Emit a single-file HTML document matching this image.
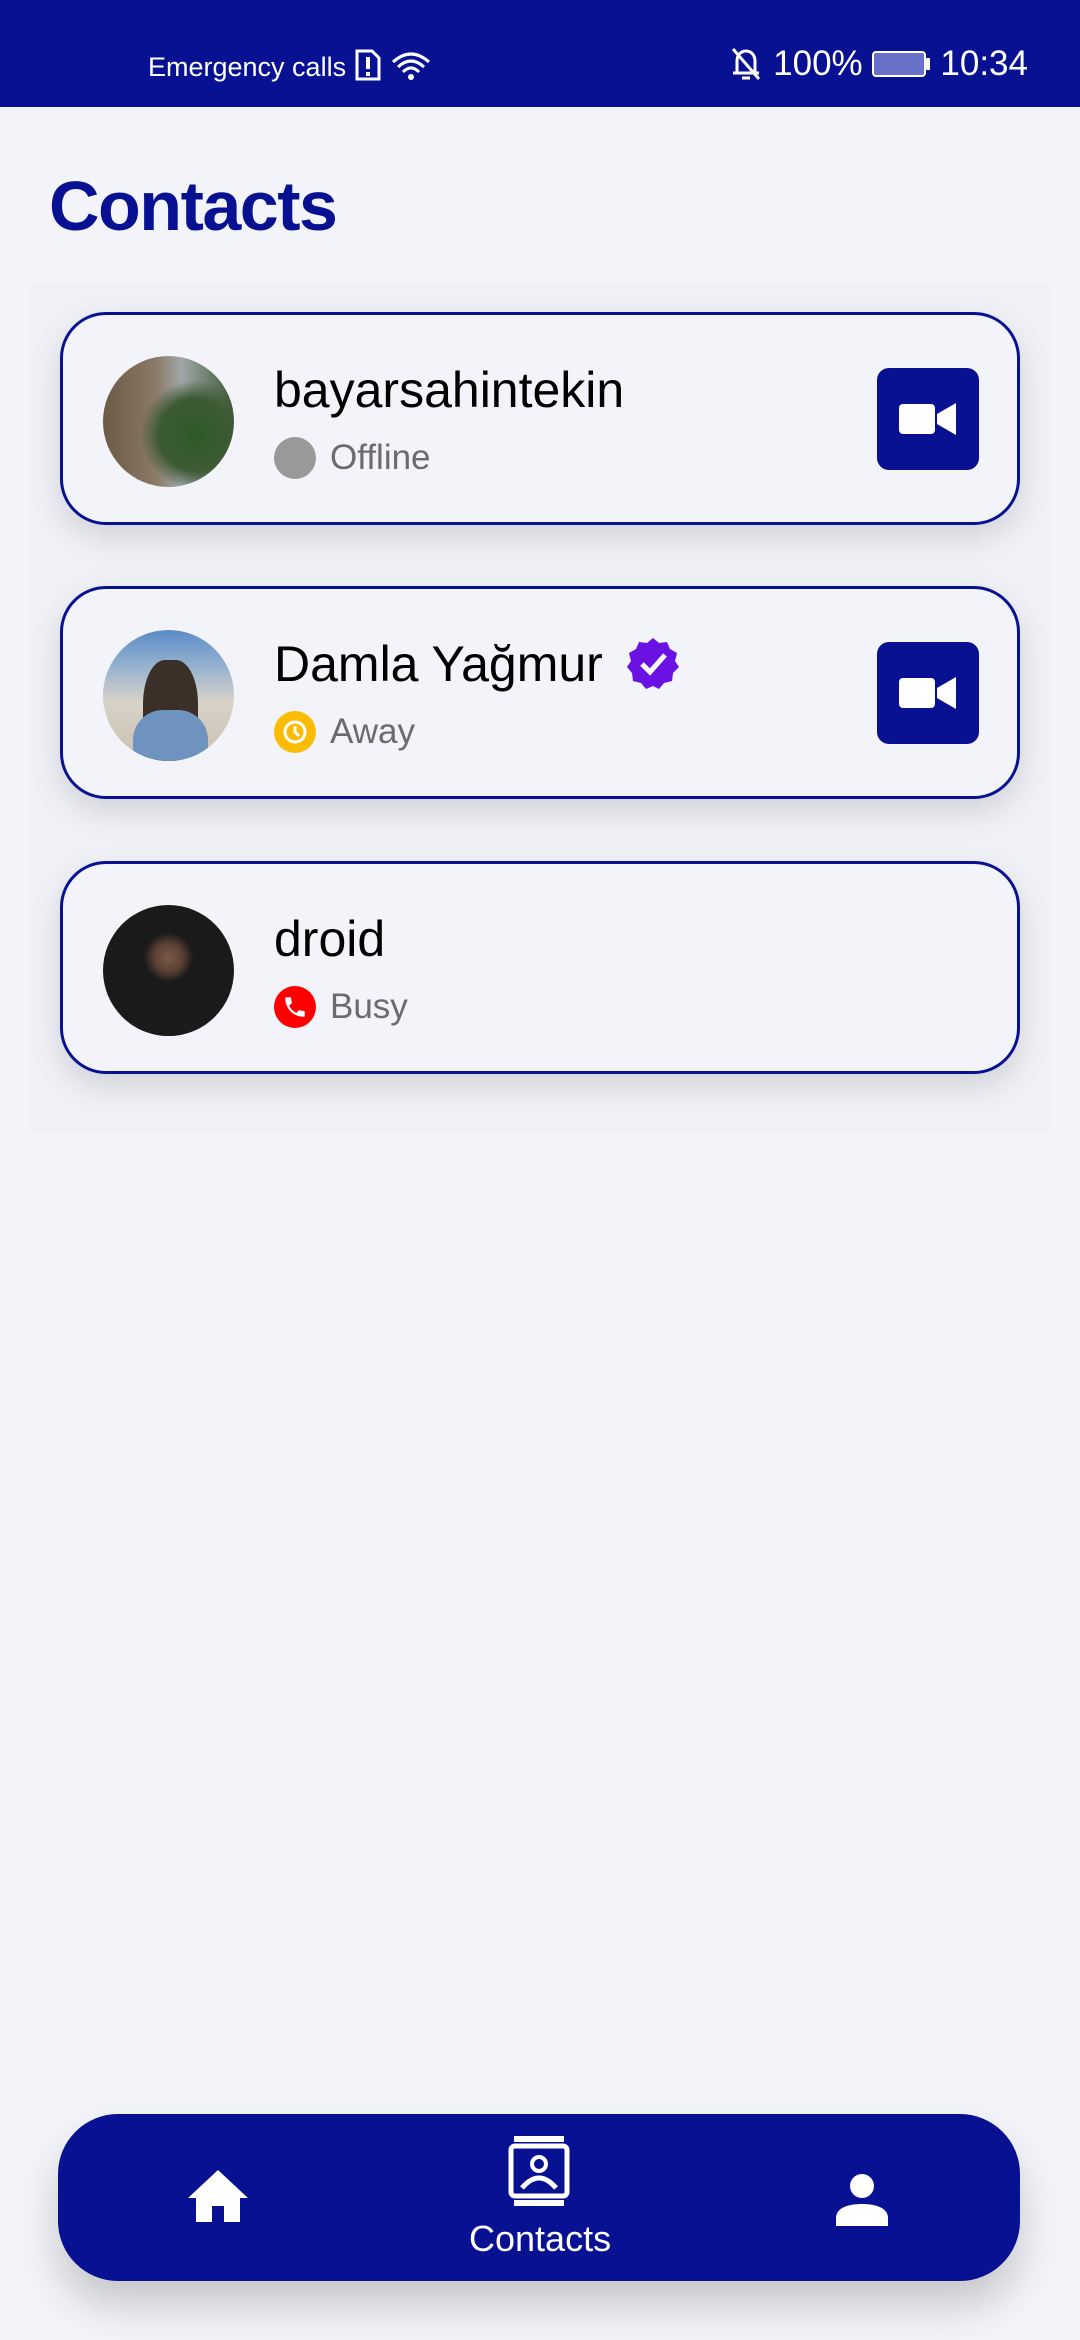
<!DOCTYPE html>
<html><head><meta charset="utf-8"><style>
*{margin:0;padding:0;box-sizing:border-box}
body{width:1080px;height:2340px;background:#f2f4f9;font-family:"Liberation Sans",sans-serif;position:relative;overflow:hidden}
.sb{position:absolute;left:0;top:0;width:1080px;height:107px;background:#081192;color:#fff}
.sb .l{position:absolute;left:148px;top:48px;font-size:27px}
.sb .r{position:absolute;right:52px;top:44px;font-size:35px;display:flex;align-items:center}
h1{position:absolute;left:49px;top:166px;font-size:70px;color:#081192;font-weight:bold;letter-spacing:-1.5px}
.wrap{position:absolute;left:30px;top:283px;width:1020px;height:851px;background:#eff1f7}
.card{position:absolute;left:60px;width:960px;height:213px;border:3px solid #081192;border-radius:46px;background:#f2f4f9;box-shadow:0 12px 30px rgba(0,0,0,0.13)}
.av{position:absolute;left:40px;top:41px;width:131px;height:131px;border-radius:50%;overflow:hidden}
.nm{position:absolute;left:211px;top:46px;font-size:50px;color:#000}
.st{position:absolute;left:211px;top:122px;height:42px;display:flex;align-items:center;font-size:35px;color:#6b6b6b}
.dot{width:42px;height:42px;border-radius:50%;margin-right:14px;display:flex;align-items:center;justify-content:center}
.vb{position:absolute;left:814px;top:53px;width:102px;height:102px;background:#081192;border-radius:12px}
.nav{position:absolute;left:58px;top:2114px;width:962px;height:167px;background:#081192;border-radius:60px;box-shadow:0 25px 40px rgba(0,0,0,0.18)}
</style></head><body>
<div class="sb"><div class="l">Emergency calls <svg width="28" height="34" viewBox="0 0 28 34" style="vertical-align:-6px"><path d="M3 3 H18 L25 10 V31 H3Z" fill="none" stroke="#fff" stroke-width="3"/><rect x="12" y="9" width="4" height="12" fill="#fff"/><rect x="12" y="24" width="4" height="4" fill="#fff"/></svg> <svg width="44" height="34" viewBox="0 0 44 34" style="vertical-align:-6px"><path d="M4 14 Q22 -2 40 14 M9 19 Q22 7 35 19 M14 24 Q22 16 30 24" stroke="#fff" stroke-width="3" fill="none"/><circle cx="22" cy="29" r="3" fill="#fff"/></svg></div>
<div class="r"><svg width="34" height="38" viewBox="0 0 34 38"><path d="M8 28 V16 C8 10 12 6 17 6 C22 6 26 10 26 16 V28 H30 M4 28 H26" stroke="#fff" stroke-width="3" fill="none"/><path d="M13 33 H21" stroke="#fff" stroke-width="3"/><path d="M4 4 L30 34" stroke="#fff" stroke-width="3"/></svg>&nbsp;100%&nbsp;<span style="display:inline-block;width:54px;height:26px;border:2px solid #fff;border-radius:4px;background:#6870c8"></span><span style="display:inline-block;width:4px;height:12px;background:#fff;margin-right:10px"></span>10:34</div></div>
<h1>Contacts</h1>
<div class="wrap"></div>

<div class="card" style="top:312px">
<div class="av" style="background:radial-gradient(circle at 70% 60%,#2f5a2a 0,#3d5a35 30%,transparent 45%),linear-gradient(90deg,#6b5a45,#8a7a66 40%,#a0a7a8 60%,#3d5a35)"></div>
<div class="nm">bayarsahintekin</div>
<div class="st"><div class="dot" style="background:#999"></div>Offline</div>
<div class="vb"><svg width="102" height="102" viewBox="0 0 102 102"><rect x="22" y="36" width="36" height="30" rx="4" fill="#fff"/><path d="M60 46 L79 35 V67 L60 56Z" fill="#fff"/></svg></div>
</div>

<div class="card" style="top:586px">
<div class="av" style="background:linear-gradient(180deg,#5a8cc8 0,#9bb5d0 30%,#d8d2c8 55%,#c9c0b0 100%)"><div style="position:absolute;left:40px;top:30px;width:55px;height:110px;border-radius:40% 40% 0 0;background:#3a3028"></div><div style="position:absolute;left:30px;top:80px;width:75px;height:60px;background:#6f93bf;border-radius:30px 30px 0 0"></div></div>
<div class="nm">Damla Yağmur</div>
<svg style="position:absolute;left:562px;top:47px" width="56" height="56" viewBox="0 0 56 56"><path d="M28 2 L34 7 L42 6 L45 13 L52 17 L50 25 L54 31 L48 37 L47 45 L39 47 L34 53 L28 50 L21 53 L16 47 L8 45 L7 37 L2 31 L6 25 L4 17 L11 13 L14 6 L22 7Z" fill="#6a11e4"/><path d="M17 28 L25 36 L40 19" stroke="#fff" stroke-width="5" fill="none"/></svg>
<div class="st"><div class="dot" style="background:#fbbc05"><svg width="28" height="28" viewBox="0 0 28 28"><circle cx="14" cy="14" r="10" fill="none" stroke="#fff" stroke-width="3"/><path d="M14 8 V14 L18 18" stroke="#fff" stroke-width="3" fill="none"/></svg></div>Away</div>
<div class="vb"><svg width="102" height="102" viewBox="0 0 102 102"><rect x="22" y="36" width="36" height="30" rx="4" fill="#fff"/><path d="M60 46 L79 35 V67 L60 56Z" fill="#fff"/></svg></div>
</div>

<div class="card" style="top:861px">
<div class="av" style="background:radial-gradient(circle at 50% 40%,#7a5a48 0,#5a4034 14%,#1a1a1a 24%),#111"><div style="position:absolute;left:25px;top:85px;width:80px;height:60px;background:#1b1b1b;border-radius:30px 30px 0 0"></div></div>
<div class="nm">droid</div>
<div class="st"><div class="dot" style="background:#f00"><svg width="26" height="26" viewBox="0 0 24 24"><path d="M6.6 10.8c1.4 2.8 3.8 5.1 6.6 6.6l2.2-2.2c.3-.3.7-.4 1-.2 1.1.4 2.3.6 3.6.6.6 0 1 .4 1 1V20c0 .6-.4 1-1 1C10.6 21 3 13.4 3 4c0-.6.4-1 1-1h3.5c.6 0 1 .4 1 1 0 1.3.2 2.5.6 3.6.1.3 0 .7-.2 1z" fill="#fff"/></svg></div>Busy</div>
</div>

<div class="nav">
<svg style="position:absolute;left:130px;top:54px" width="60" height="56" viewBox="0 0 60 56"><path d="M30 2 L60 30 H52 V54 H36 V38 H24 V54 H8 V30 H0Z" fill="#fff"/></svg>
<svg style="position:absolute;left:450px;top:22px" width="62" height="70" viewBox="0 0 62 70"><rect x="6" y="0" width="50" height="6" fill="#fff"/><rect x="6" y="64" width="50" height="6" fill="#fff"/><rect x="3" y="10" width="56" height="50" rx="4" fill="none" stroke="#fff" stroke-width="5"/><circle cx="31" cy="28" r="7" fill="none" stroke="#fff" stroke-width="4"/><path d="M14 52 Q31 32 48 52" fill="none" stroke="#fff" stroke-width="5"/></svg>
<div style="position:absolute;left:411px;top:104px;font-size:36px;color:#fff">Contacts</div>
<svg style="position:absolute;left:776px;top:60px" width="56" height="52" viewBox="0 0 56 52"><circle cx="28" cy="12" r="12" fill="#fff"/><path d="M2 52 V44 C2 34 14 30 28 30 C42 30 54 34 54 44 V52Z" fill="#fff"/></svg>
</div>
</body></html>
